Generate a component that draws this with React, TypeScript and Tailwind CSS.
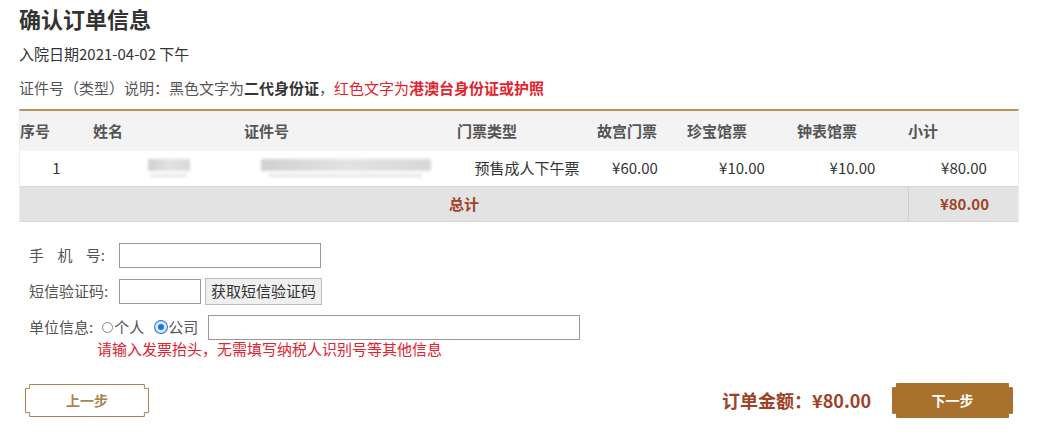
const font = { fontFamily: '"Noto Sans CJK SC", "Liberation Sans", sans-serif' };

function NotchFrame({ fill }: { fill: boolean }) {
  // rectangle with small inverted square corners
  return (
    <svg className="absolute inset-0 w-full h-full" viewBox="0 0 120 34" preserveAspectRatio="none">
      <path
        d="M4.5 0.5 H115.5 V4.5 H119.5 V29.5 H115.5 V33.5 H4.5 V29.5 H0.5 V4.5 H4.5 Z"
        fill={fill ? "#a8712e" : "#fff"}
        stroke={fill ? "#a8712e" : "#a8854f"}
        strokeWidth={1}
        vectorEffect="non-scaling-stroke"
      />
    </svg>
  );
}

function Blur({ w }: { w: number }) {
  return (
    <div className="flex flex-col items-center gap-[2px]" style={{ width: w }}>
      <div className="h-[12px] w-full bg-gradient-to-r from-[#d0d0d0] via-[#e2e2e2] to-[#d8d8d8] blur-[1.5px]" />
      <div className="h-[5px] w-[90%] bg-[#efefef] blur-[1px]" />
    </div>
  );
}

export default function App() {
  const cols = "grid grid-cols-[73px_151px_213px_140px_90px_110px_111px_112px]";
  return (
    <div className="w-[1055px] h-[444px] bg-white text-[#333] text-[15px] overflow-hidden" style={font}>
      <div className="pl-[19px] pr-[36px] pt-[3px]">
        <h1 className="text-[22px] font-bold leading-[30px] text-[#333]">确认订单信息</h1>
        <p className="mt-[11px] leading-[20px] text-[#333]">入院日期2021-04-02 下午</p>
        <p className="mt-[14px] leading-[20px] text-[#555]">
          证件号（类型）说明：黑色文字为<b className="text-[#333]">二代身份证</b>，
          <span className="text-[#e3222d]">红色文字为<b>港澳台身份证或护照</b></span>
        </p>

        <div className="mt-[11px] border-t-2 border-[#b8935a] border-x border-x-[#eeeeee] w-[1000px]">
          <div className={`${cols} h-[40px] items-center bg-[#f3f3f3] font-bold text-[#555]`}>
            <span>序号</span>
            <span>姓名</span>
            <span>证件号</span>
            <span>门票类型</span>
            <span>故宫门票</span>
            <span>珍宝馆票</span>
            <span>钟表馆票</span>
            <span>小计</span>
          </div>
          <div className={`${cols} h-[36px] items-center bg-white text-[#333] text-center border-b border-[#d6d6d6]`}>
            <span>1</span>
            <div className="flex justify-center"><Blur w={42} /></div>
            <div className="flex justify-center pr-[10px]"><Blur w={170} /></div>
            <span>预售成人下午票</span>
            <span className="pr-[14px]">¥60.00</span>
            <span>¥10.00</span>
            <span>¥10.00</span>
            <span>¥80.00</span>
          </div>
          <div className="grid grid-cols-[888px_112px] h-[35px] items-center bg-[#e3e3e3] font-bold text-[#a0432a] text-center border-b border-[#d6d6d6]">
            <span>总计</span>
            <span className="h-full flex items-center justify-center border-l border-[#cfcfcf]">¥80.00</span>
          </div>
        </div>

        <div className="mt-[20px] pl-[10px] text-[#555] flex flex-col gap-[10px]">
          <div className="flex items-center h-[26px]">
            <span className="w-[90px] flex justify-between pr-[14px]">
              <span>手</span><span>机</span><span>号:</span>
            </span>
            <input className="w-[202px] h-[25px] border border-[#999] outline-none" />
          </div>
          <div className="flex items-center h-[26px]">
            <span className="w-[90px]">短信验证码:</span>
            <input className="w-[82px] h-[25px] border border-[#999] outline-none" />
            <button className="ml-[4px] h-[27px] px-[5px] bg-[#efefef] border border-[#bbb] text-[#333]">获取短信验证码</button>
          </div>
          <div className="flex flex-col">
            <div className="flex items-center h-[26px]">
              <span>单位信息:</span>
              <label className="ml-[9px] flex items-center">
                <span className="w-[11px] h-[11px] rounded-full border border-[#888] bg-white mr-[1px]" />
                个人
              </label>
              <label className="ml-[11px] flex items-center">
                <span className="w-[12px] h-[12px] rounded-full bg-[#1a73e8] border-[3px] border-[#dbe8fb] ring-1 ring-[#1a73e8] mr-[1px]" />
                公司
              </label>
              <input className="ml-[10px] w-[372px] h-[25px] border border-[#999] outline-none" />
            </div>
            <p className="pl-[68px] mt-[-1px] leading-[20px] text-[#e3222d]">请输入发票抬头，无需填写纳税人识别号等其他信息</p>
          </div>
        </div>

        <div className="mt-[24px] flex items-center pl-[6px]">
          <button className="relative w-[124px] h-[33px] text-[14px] font-bold text-[#a8854f]">
            <NotchFrame fill={false} />
            <span className="relative">上一步</span>
          </button>
          <div className="ml-auto flex items-center">
            <span className="text-[18px] font-bold text-[#9e4126] mr-[21px]">订单金额：¥80.00</span>
            <button className="relative w-[121px] h-[35px] text-[14px] font-bold text-white mr-[6px]">
              <NotchFrame fill={true} />
              <span className="relative">下一步</span>
            </button>
          </div>
        </div>
      </div>
    </div>
  );
}
